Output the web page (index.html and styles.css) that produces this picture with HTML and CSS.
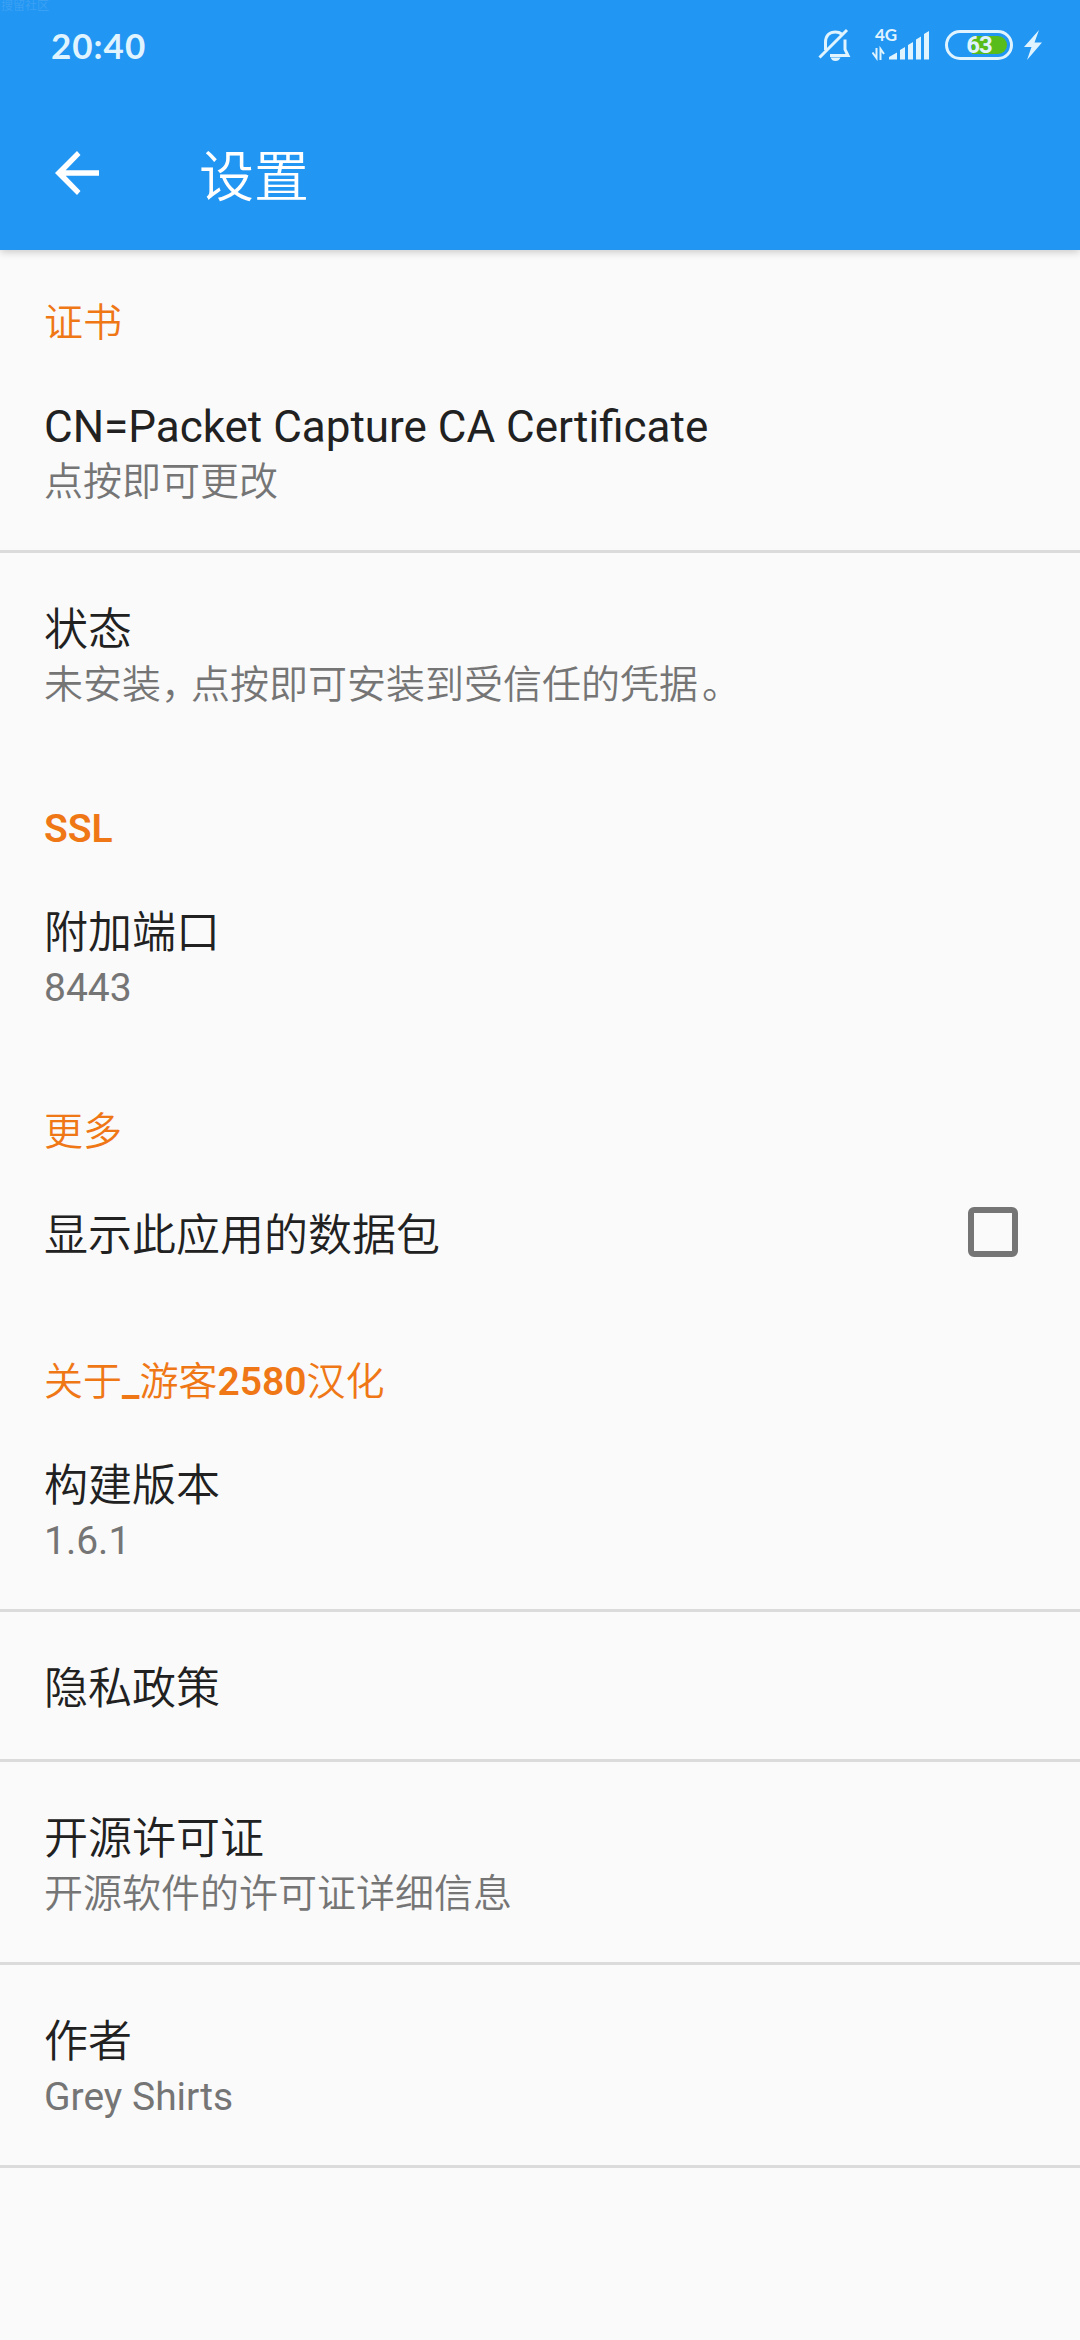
FILE: index.html
```html
<!DOCTYPE html>
<html lang="zh-CN">
<head>
    <meta charset="UTF-8">
    <meta name="viewport" content="width=device-width, initial-scale=1.0">
    <title>设置</title>
    <link rel="stylesheet" href="styles.css">
</head>
<body>
    <header class="header">
        <span class="watermark">搜留社区</span>
        <div class="status-bar">
            <span class="clock">20:40</span>
            <div class="status-icons">
                <!-- Muted bell -->
                <svg class="icon-bell" width="34" height="34" viewBox="0 0 34 34">
                    <path d="M7.5 22V14.5C7.5 7.5 11.5 4 17.5 4C20 4 22 4.700 23.500 6M27 11.500V21.500L30 27.500H12" fill="none" stroke="#e0f4ff" stroke-width="3"/>
                    <path d="M1.500 29.500L29 2" stroke="#e0f4ff" stroke-width="3"/>
                    <path d="M12.500 29.500H22.500C21.500 32 20 33 17.500 33S13.500 32 12.500 29.500Z" fill="#e0f4ff"/>
                </svg>
                <div class="signal">
                    <span class="network">4G</span>
                    <svg class="icon-signal" width="58" height="31" viewBox="0 0 58 31">
                        <path d="M0.500 22.500L4.500 28V18M8.500 30V19L12 24" fill="none" stroke="#e0f4ff" stroke-width="2"/>
                        <path d="M17 29.500V27L25 22.500V29.500ZM28 29.500V20L33 17V29.500ZM36 29.500V15L41 12V29.500ZM44 29.500V9.500L49 6.500V29.500ZM52 29.500V4L57 1V29.500Z" fill="#e0f4ff"/>
                    </svg>
                </div>
                <div class="battery"><span class="battery-level">63</span></div>
                <svg class="icon-bolt" width="20" height="30" viewBox="0 0 20 30">
                    <path d="M16 0L1 17H8.500L4 30L19 12.500H11.500Z" fill="#e0f4ff"/>
                </svg>
            </div>
        </div>
        <div class="toolbar">
            <svg class="icon-back" width="44" height="44" viewBox="0 0 44 44">
                <path d="M44 19.200V24.800H10.700L25.500 40L22 44L0 22L22 0L25.500 4L10.700 19.200Z" fill="#fff"/>
            </svg>
            <h1>设置</h1>
        </div>
    </header>

    <main class="settings">
        <section>
            <h2>证书</h2>
            <div class="row">
                <p class="title latin">CN=Packet Capture CA Certificate</p>
                <p class="summary">点按即可更改</p>
            </div>
            <div class="row">
                <p class="title">状态</p>
                <p class="summary">未安装<span class="comma">，</span>点按即可安装到受信任的凭据<span class="stop">。</span></p>
            </div>
        </section>
        <section>
            <h2><b>SSL</b></h2>
            <div class="row">
                <p class="title">附加端口</p>
                <p class="summary latin">8443</p>
            </div>
        </section>
        <section>
            <h2>更多</h2>
            <div class="row single">
                <p class="title">显示此应用的数据包</p>
                <span class="checkbox"></span>
            </div>
        </section>
        <section>
            <h2>关于<b>_</b>游客<b>2580</b>汉化</h2>
            <div class="row">
                <p class="title">构建版本</p>
                <p class="summary latin">1.6.1</p>
            </div>
            <div class="row single">
                <p class="title">隐私政策</p>
            </div>
            <div class="row">
                <p class="title">开源许可证</p>
                <p class="summary">开源软件的许可证详细信息</p>
            </div>
            <div class="row last">
                <p class="title">作者</p>
                <p class="summary latin">Grey Shirts</p>
            </div>
        </section>
    </main>
</body>
</html>
```
FILE: styles.css
```css
* {
    box-sizing: border-box;
}
body {
    margin: 0;
    min-height: 2340px;
    background-color: #fafafa;
    color: #212121;
    font-family: Roboto, "Noto Sans CJK SC", sans-serif;
}
h1, h2, p {
    margin: 0;
    font-weight: 350;
    white-space: nowrap;
}
.header {
    position: relative;
    height: 250px;
    background-color: #2196f3;
    color: #fff;
    box-shadow: 0 2px 8px rgba(0,0,0,0.2);
}
.watermark {
    position: absolute;
    top: 0;
    left: 1px;
    font-size: 12px;
    line-height: 12px;
    color: #3ba1f3;
}
.status-bar {
    display: flex;
    justify-content: space-between;
    align-items: center;
    height: 90px;
    padding: 0 37px 0 51px;
    color: #e0f4ff;
}
.clock {
    margin-top: -1px;
    font-family: Lato, sans-serif;
    font-size: 35px;
    font-weight: 700;
    letter-spacing: 1px;
}
.status-icons {
    display: flex;
    align-items: center;
}
.signal {
    position: relative;
    margin-left: 20px;
    height: 31px;
}
.network {
    position: absolute;
    top: -4px;
    left: 3px;
    font-family: Lato, sans-serif;
    font-size: 17px;
    font-weight: 700;
    line-height: 17px;
}
.icon-bell, .icon-signal, .icon-bolt, .icon-back {
    display: block;
}
.battery {
    width: 68px;
    height: 30px;
    margin: 0 10px 0 15px;
    padding: 3px;
    border: 3px solid #e0f4ff;
    border-radius: 15px;
}
.battery-level {
    display: block;
    height: 18px;
    border-radius: 9px;
    background: linear-gradient(to right, transparent 37%, #58bd1b 37%);
    font-family: Roboto, sans-serif;
    font-size: 24px;
    font-weight: 700;
    line-height: 19px;
    letter-spacing: -1px;
    text-align: center;
}
.toolbar {
    display: flex;
    align-items: center;
    height: 160px;
    padding: 6px 0 0 55px;
}
h1 {
    margin: 7px 0 0 100px;
    font-size: 55px;
    line-height: 80px;
}
h2 {
    height: 100px;
    padding: 47px 44px 0;
    font-size: 39px;
    line-height: 52px;
    color: #ef7716;
}
.row {
    height: 203px;
    padding: 48px 44px 0;
    border-bottom: 3px solid #dbdbdb;
}
.row:last-child:not(.last) {
    border-bottom-color: transparent;
}
.single {
    display: flex;
    justify-content: space-between;
    height: 150px;
}
.title {
    font-size: 44px;
    line-height: 58px;
}
.summary {
    font-size: 39px;
    line-height: 52px;
    color: #757575;
}
.latin {
    font-weight: 400;
}
.comma {
    letter-spacing: -9px;
}
.stop {
    margin-left: 4px;
}
.checkbox {
    width: 50px;
    height: 50px;
    margin: 0 18px 0 0;
    border: 6px solid #757575;
    border-radius: 6px;
}
h2 b {
    font-weight: 600;
}
```
